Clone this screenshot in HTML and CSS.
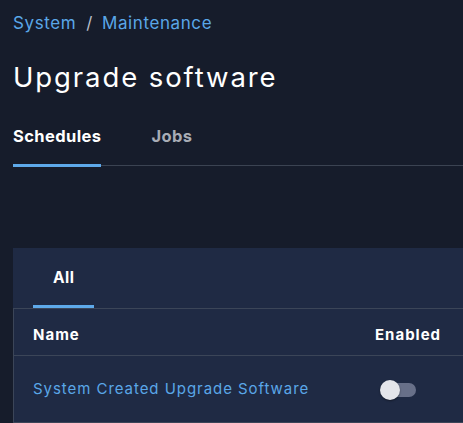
FILE: index.html
```html
<!DOCTYPE html>
<html>
<head>
<meta charset="utf-8">
<link rel="stylesheet" href="styles.css">
</head>
<body>
<div class="page">
  <nav class="crumbs"><a>System</a><span class="sep">/</span><a>Maintenance</a></nav>
  <h1 class="title">Upgrade software</h1>
  <div class="tabs">
    <div class="tab active">Schedules</div>
    <div class="tab">Jobs</div>
  </div>
  <section class="panel">
    <div class="subtabs">
      <div class="subtab active">All</div>
    </div>
    <div class="table">
      <div class="row head">
        <div class="c-name">Name</div>
        <div class="c-en">Enabled</div>
      </div>
      <div class="row">
        <div class="c-name link">System Created Upgrade Software</div>
        <div class="c-en"><span class="toggle"><span class="knob"></span></span></div>
      </div>
    </div>
  </section>
</div>
</body>
</html>
```
FILE: styles.css
```css
* { box-sizing: border-box; }
html, body { margin: 0; padding: 0; background: #161c2b; overflow: hidden; }
body { font-family: Inter, "Noto Sans", sans-serif; color: #fff; }
.page { padding: 11px 0 0 13px; }
.crumbs { font-size: 17px; color: #5aa7e8; line-height: 24px; display: flex; letter-spacing: 0.6px; }
.crumbs .sep { color: #b9bec8; margin: 0 9px 0 10px; }
.title { font-size: 27.5px; font-weight: 400; margin: 0; line-height: 36px; margin-top: 24px; letter-spacing: 1.9px; }
.tabs { display: flex; gap: 50px; margin-top: 30px; border-bottom: 1px solid #3b4352; }
.tab { font-size: 16.5px; font-weight: 700; color: #a8acb5; padding-bottom: 17px; line-height: 22px; margin-bottom: -2px; border-bottom: 3px solid transparent; letter-spacing: 0.4px; }
.tab.active { color: #fff; border-bottom-color: #5ea9ea; }
.panel { margin-top: 82px; background: #1f2a44; }
.subtabs { display: flex; padding-left: 20px; }
.subtab { font-size: 15.5px; font-weight: 700; padding: 19px 20px 16px; line-height: 22px; border-bottom: 3px solid #5ea9ea; letter-spacing: 0.5px; }
.table { border-left: 1px solid #3b4558; border-top: 1px solid #3b4558; }
.row { display: flex; align-items: center; border-bottom: 1px solid #3b4558; padding-left: 19px; }
.row.head { height: 47px; padding-top: 4px; font-weight: 700; font-size: 15px; letter-spacing: 1px; }
.row:not(.head) { height: 67px; padding-bottom: 1px; font-size: 15px; }
.c-name { flex: 1; }
.c-en { width: 88px; }
.link { color: #5aa7e8; letter-spacing: 0.95px; }
.toggle { display: inline-block; position: relative; width: 34px; height: 14px; border-radius: 7px; background: #687089; margin-left: 7px; vertical-align: middle; }
.knob { position: absolute; left: -2px; top: -3px; width: 20px; height: 20px; border-radius: 50%; background: #e4e5ea; box-shadow: 0 1px 2px rgba(0,0,0,0.4); }
```
